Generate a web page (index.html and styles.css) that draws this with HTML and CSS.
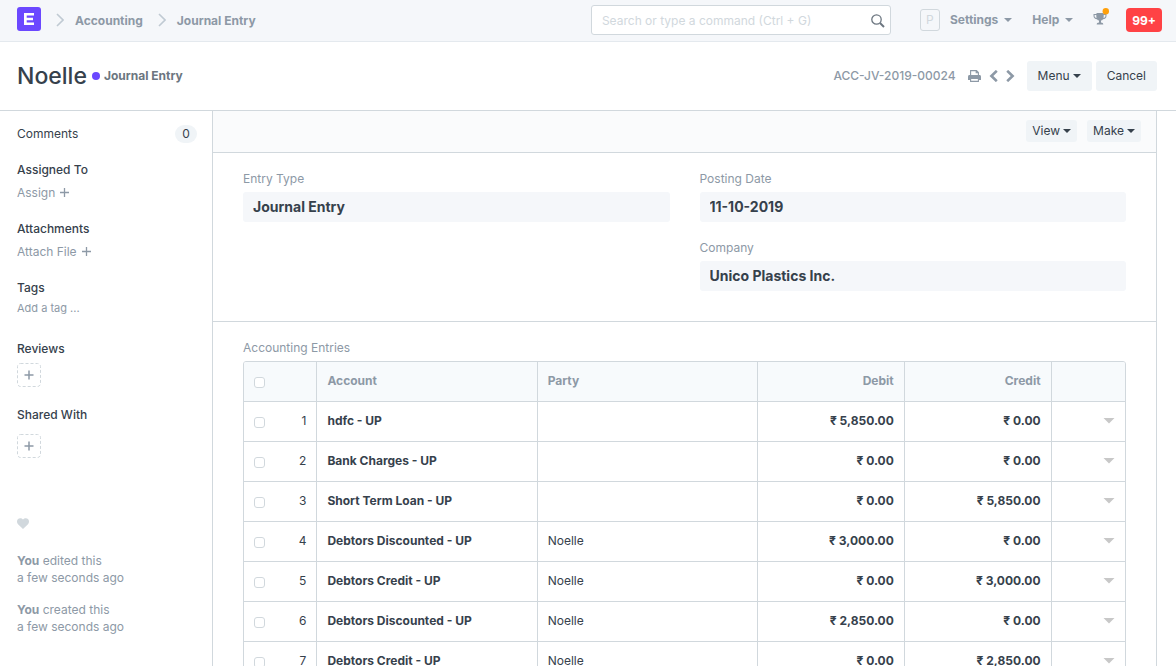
FILE: index.html
```html
<!DOCTYPE html>
<html lang="en">
<head>
<meta charset="utf-8">
<title>Noelle - Journal Entry</title>
<link rel="stylesheet" href="styles.css">
</head>
<body>
<header class="navbar">
  <nav class="crumbs" aria-label="Breadcrumb">
    <a href="#" class="logo" aria-label="Home">
      <svg width="24" height="24" viewBox="0 0 24 24"><rect width="24" height="24" rx="3" fill="#6b48ff"/><path d="M7 6h10v2.400H9.700v2.400h6.300v2.400H9.700v2.400H17V18H7z" fill="#fff"/></svg>
    </a>
    <svg class="crumb-sep" width="8" height="14" viewBox="0 0 8 14"><path d="M1 1l6 6-6 6" fill="none" stroke="#c0cad3" stroke-width="1.600"/></svg>
    <a href="#" class="nav-link">Accounting</a>
    <svg class="crumb-sep" width="8" height="14" viewBox="0 0 8 14"><path d="M1 1l6 6-6 6" fill="none" stroke="#c0cad3" stroke-width="1.600"/></svg>
    <a href="#" class="nav-link">Journal Entry</a>
  </nav>
  <div class="nav-right">
    <div class="search">
      <input type="text" class="search-input" placeholder="Search or type a command (Ctrl + G)" aria-label="Search or type a command">
      <svg class="search-icon" width="14" height="14" viewBox="0 0 14 14" fill="none" stroke="#6c7680"><circle cx="5.500" cy="5.500" r="4.700" stroke-width="1.300"/><path d="M9 9l4 4" stroke-width="2"/></svg>
    </div>
    <a href="#" class="avatar">P</a>
    <button type="button" class="nav-link nav-menu">Settings <span class="caret"></span></button>
    <button type="button" class="nav-link nav-menu">Help <span class="caret"></span></button>
    <button type="button" class="trophy" aria-label="Energy points">
      <svg width="16" height="20" viewBox="0 0 16 20"><path d="M3.500 5h7v1H13.500v2c0 2-1.500 3-3.500 3.200-.5.700-1.200 1.200-2 1.400V14.500c1.500.2 2.300.8 2.300 2H3.700c0-1.200.8-1.800 2.300-2v-1.900c-.8-.2-1.500-.7-2-1.400C2 11 .5 10 .5 8V6h3zM1.600 7.100V8c0 1 .7 1.700 1.900 2-.2-.9-.2-1.900-.2-2.900zm9.100 0c0 1 0 2-.2 2.900 1.200-.3 1.900-1 1.900-2v-.9z" fill="#8d99a6"/><circle cx="12.800" cy="3.200" r="3.200" fill="#ffa00a"/></svg>
    </button>
    <button type="button" class="alerts">99+</button>
  </div>
</header>

<div class="page-head">
  <div class="page-title">
    <h1 class="title">Noelle</h1>
    <span class="dot"></span>
    <span class="status">Journal Entry</span>
  </div>
  <div class="page-actions">
    <span class="doc-id">ACC-JV-2019-00024</span>
    <div class="icon-group">
      <button type="button" class="icon-btn" aria-label="Print"><svg width="13" height="12" viewBox="0 0 13 12"><path d="M2.600 5V.6h5.900l1.900 1.900V5M8.200.8v2h2" fill="none" stroke="#8d99a6" stroke-width="1.100"/><path d="M1.500 5h10C12.400 5 13 5.600 13 6.500V10H0V6.500C0 5.600.6 5 1.500 5z" fill="#8d99a6"/><path d="M2.600 8.500h7.800v2.900H2.600z" fill="#fff" stroke="#8d99a6" stroke-width="1.100"/></svg></button>
      <button type="button" class="icon-btn" aria-label="Previous"><svg width="9" height="12" viewBox="0 0 9 12"><path d="M7.800 .8L2.400 6l5.400 5.200" fill="none" stroke="#8d99a6" stroke-width="2.600"/></svg></button>
      <button type="button" class="icon-btn" aria-label="Next"><svg width="9" height="12" viewBox="0 0 9 12"><path d="M1.200 .8L6.600 6l-5.400 5.200" fill="none" stroke="#8d99a6" stroke-width="2.600"/></svg></button>
    </div>
    <div class="btn-group">
      <button type="button" class="btn">Menu <span class="caret"></span></button>
      <button type="button" class="btn">Cancel</button>
    </div>
  </div>
</div>

<div class="layout">
  <aside class="sidebar">
    <div class="comments"><a href="#" class="side-link">Comments</a><span class="badge">0</span></div>
    <section class="side-group">
      <h2 class="side-title">Assigned To</h2>
      <button type="button" class="add-link">Assign <svg width="9" height="9" viewBox="0 0 9 9"><path d="M4.500 0v9M0 4.500h9" stroke="#8d99a6" stroke-width="1.300"/></svg></button>
    </section>
    <section class="side-group">
      <h2 class="side-title">Attachments</h2>
      <button type="button" class="add-link">Attach File <svg width="9" height="9" viewBox="0 0 9 9"><path d="M4.500 0v9M0 4.500h9" stroke="#8d99a6" stroke-width="1.300"/></svg></button>
    </section>
    <section class="side-group side-tags">
      <h2 class="side-title">Tags</h2>
      <button type="button" class="add-link tag-link">Add a tag ...</button>
    </section>
    <section class="side-group">
      <h2 class="side-title">Reviews</h2>
      <button type="button" class="add-box" aria-label="Add review"><svg width="24" height="24" viewBox="0 0 24 24"><rect x=".5" y=".5" width="23" height="23" rx="3" fill="none" stroke="#d1d8dd" stroke-dasharray="3 2"/><path d="M12 7.500v9M7.500 12h9" stroke="#8d99a6" stroke-width="1.500"/></svg></button>
    </section>
    <section class="side-group side-shared">
      <h2 class="side-title">Shared With</h2>
      <button type="button" class="add-box" aria-label="Share"><svg width="24" height="24" viewBox="0 0 24 24"><rect x=".5" y=".5" width="23" height="23" rx="3" fill="none" stroke="#d1d8dd" stroke-dasharray="3 2"/><path d="M12 7.500v9M7.500 12h9" stroke="#8d99a6" stroke-width="1.500"/></svg></button>
    </section>
    <button type="button" class="like" aria-label="Like"><svg width="12" height="11" viewBox="0 0 12 11"><path d="M6 11L1 6.200C-.3 4.900-.3 2.600.8 1.300 2-.2 4.500-.4 6 1.500 7.500-.4 10-.2 11.200 1.300c1.100 1.300 1.100 3.600-.2 4.900z" fill="#d1d8dd"/></svg></button>
    <p class="history"><b>You</b> edited this<br>a few seconds ago</p>
    <p class="history"><b>You</b> created this<br>a few seconds ago</p>
  </aside>

  <main class="form">
    <div class="toolbar">
      <button type="button" class="btn btn-xs">View <span class="caret"></span></button>
      <button type="button" class="btn btn-xs">Make <span class="caret"></span></button>
    </div>
    <section class="section section-fields">
      <div class="column">
        <div class="field"><label class="label" for="entry-type">Entry Type</label><input class="value" id="entry-type" value="Journal Entry" readonly></div>
      </div>
      <div class="column">
        <div class="field"><label class="label" for="posting-date">Posting Date</label><input class="value" id="posting-date" value="11-10-2019" readonly></div>
        <div class="field"><label class="label" for="company">Company</label><input class="value" id="company" value="Unico Plastics Inc." readonly></div>
      </div>
    </section>
    <section class="section">
      <div class="label" id="entries-label">Accounting Entries</div>
      <div class="grid">
        <table class="entries" aria-labelledby="entries-label">
          <colgroup><col class="col-1"><col class="col-3"><col class="col-3"><col class="col-2"><col class="col-2"><col class="col-1"></colgroup>
          <thead>
            <tr><th><div class="index"><input type="checkbox" class="check" aria-label="Select all"></div></th><th>Account</th><th>Party</th><th class="num">Debit</th><th class="num">Credit</th><th></th></tr>
          </thead>
          <tbody>
            <tr><td><div class="index"><input type="checkbox" class="check" aria-label="Select row 1"><span>1</span></div></td><td class="strong">hdfc - UP</td><td></td><td class="num">₹ 5,850.00</td><td class="num">₹ 0.00</td><td class="open"><button type="button" class="row-open" aria-label="Open row 1"></button></td></tr>
            <tr><td><div class="index"><input type="checkbox" class="check" aria-label="Select row 2"><span>2</span></div></td><td class="strong">Bank Charges - UP</td><td></td><td class="num">₹ 0.00</td><td class="num">₹ 0.00</td><td class="open"><button type="button" class="row-open" aria-label="Open row 2"></button></td></tr>
            <tr><td><div class="index"><input type="checkbox" class="check" aria-label="Select row 3"><span>3</span></div></td><td class="strong">Short Term Loan - UP</td><td></td><td class="num">₹ 0.00</td><td class="num">₹ 5,850.00</td><td class="open"><button type="button" class="row-open" aria-label="Open row 3"></button></td></tr>
            <tr><td><div class="index"><input type="checkbox" class="check" aria-label="Select row 4"><span>4</span></div></td><td class="strong">Debtors Discounted - UP</td><td>Noelle</td><td class="num">₹ 3,000.00</td><td class="num">₹ 0.00</td><td class="open"><button type="button" class="row-open" aria-label="Open row 4"></button></td></tr>
            <tr><td><div class="index"><input type="checkbox" class="check" aria-label="Select row 5"><span>5</span></div></td><td class="strong">Debtors Credit - UP</td><td>Noelle</td><td class="num">₹ 0.00</td><td class="num">₹ 3,000.00</td><td class="open"><button type="button" class="row-open" aria-label="Open row 5"></button></td></tr>
            <tr><td><div class="index"><input type="checkbox" class="check" aria-label="Select row 6"><span>6</span></div></td><td class="strong">Debtors Discounted - UP</td><td>Noelle</td><td class="num">₹ 2,850.00</td><td class="num">₹ 0.00</td><td class="open"><button type="button" class="row-open" aria-label="Open row 6"></button></td></tr>
            <tr><td><div class="index"><input type="checkbox" class="check" aria-label="Select row 7"><span>7</span></div></td><td class="strong">Debtors Credit - UP</td><td>Noelle</td><td class="num">₹ 0.00</td><td class="num">₹ 2,850.00</td><td class="open"><button type="button" class="row-open" aria-label="Open row 7"></button></td></tr>
          </tbody>
        </table>
      </div>
    </section>
  </main>
</div>
</body>
</html>
```

FILE: styles.css
```css
* { box-sizing: border-box; }

html { scrollbar-width: none; }

body {
  margin: 0;
  font: 12px/17px Inter, "Noto Sans", sans-serif;
  color: #36414c;
  background: #fff;
}

button {
  font: inherit;
  color: inherit;
  background: none;
  border: 0;
  padding: 0;
  cursor: pointer;
}

a { color: inherit; text-decoration: none; }
h1, h2, p { margin: 0; }
svg { display: block; flex: none; }

.caret {
  display: inline-block;
  margin-top: 2px;
  border: 4px solid transparent;
  border-top-color: currentColor;
  border-bottom: 0;
}

/* Navigation bar */
.navbar {
  display: flex;
  align-items: center;
  justify-content: space-between;
  height: 42px;
  padding: 0 14px 1px 17px;
  background: #f5f7fa;
  border-bottom: 1px solid #e4e9ee;
}

.crumbs { display: flex; align-items: center; }
.logo { margin-bottom: 2px; }
.crumb-sep { margin: 0 11px 0 15px; }
.nav-link { color: #8d99a6; font-weight: 700; }
.nav-right { display: flex; align-items: center; }
.search { position: relative; width: 300px; }

.search-input {
  display: block;
  width: 100%;
  height: 30px;
  padding: 0 34px 0 10px;
  font: inherit;
  color: #36414c;
  background: #fff;
  border: 1px solid #d1d8dd;
  border-radius: 3px;
}

.search-input::placeholder { color: #d1d8dd; opacity: 1; }
.search-icon { position: absolute; top: 9px; right: 6px; }

.avatar {
  width: 20px;
  height: 22px;
  margin: 0 10px 0 29px;
  line-height: 20px;
  text-align: center;
  color: #d1d8dd;
  border: 1px solid #d1d8dd;
  border-radius: 3px;
}

.nav-menu { display: flex; align-items: center; gap: 6px; margin-right: 20px; padding-bottom: 2px; }
.trophy { margin-right: 17px; padding-bottom: 4px; }

.alerts {
  height: 24px;
  padding: 0 6px;
  color: #fff;
  font-weight: 700;
  background: #ff4245;
  border-radius: 4px;
}

/* Page heading */
.page-head {
  display: flex;
  align-items: center;
  justify-content: space-between;
  height: 69px;
  padding: 0 19px 0 17px;
  border-bottom: 1px solid #d1d8dd;
}

.page-title { display: flex; align-items: center; }
.title { font-size: 23px; line-height: 32px; font-weight: 500; }

.dot {
  width: 8px;
  height: 8px;
  margin: 0 4px 0 5px;
  background: #6b48ff;
  border-radius: 50%;
}

.status { padding-bottom: 2px; color: #6c7680; font-weight: 700; }
.page-actions { display: flex; align-items: center; gap: 12px; }
.doc-id { padding-bottom: 2px; color: #8d99a6; font-weight: 500; }
.icon-group { display: flex; align-items: center; gap: 8px; }
.btn-group { display: flex; gap: 4px; }

.btn {
  display: flex;
  align-items: center;
  gap: 3px;
  height: 30px;
  padding: 0 11px 2px;
  background: #f0f4f7;
  border-radius: 3px;
}

.btn-xs { height: 22px; padding: 0 6px 2px; }

/* Sidebar */
.layout { display: flex; align-items: stretch; padding-right: 19px; }
.sidebar { flex: 0 0 212px; padding: 14px 15px 20px 17px; }
.comments { display: flex; align-items: flex-start; justify-content: space-between; margin-bottom: 18px; }

.badge {
  width: 22px;
  line-height: 18px;
  text-align: center;
  background: #f0f4f7;
  border-radius: 9px;
}

.side-group { margin-bottom: 19px; }
.side-tags { margin-bottom: 23px; }
.side-title { margin-bottom: 6px; font-size: 12px; line-height: 17px; font-weight: 500; }
.side-tags .side-title { margin-bottom: 4px; }
.side-shared .side-title { margin-bottom: 11px; }
.add-link { display: flex; align-items: center; gap: 5px; color: #8d99a6; }
.tag-link { font-size: 11px; }
.add-box, .like { display: block; }
.like { margin: 60px 0 23px; }
.history { margin-bottom: 15px; color: #8d99a6; }
.history b { font-weight: 700; }

/* Form */
.form {
  flex: 1;
  min-width: 0;
  border: solid #d1d8dd;
  border-width: 0 1px;
}

.toolbar {
  display: flex;
  justify-content: flex-end;
  gap: 10px;
  padding: 9px 15px 10px;
  background: #fafbfc;
  border-bottom: 1px solid #d1d8dd;
}

.section { padding: 17px 30px 30px; }

.section-fields {
  display: grid;
  grid-template-columns: 1fr 1fr;
  gap: 30px;
  border-bottom: 1px solid #d1d8dd;
}

.column { display: flex; flex-direction: column; gap: 17px; }
.label { display: block; margin-bottom: 5px; color: #8d99a6; }

.value {
  display: block;
  width: 100%;
  height: 30px;
  padding: 0 10px 2px;
  font: 700 14px/20px Inter, "Noto Sans", sans-serif;
  color: #36414c;
  background: #f5f7fa;
  border: 0;
  border-radius: 3px;
}

/* Entries table */
.grid { border: 1px solid #d1d8dd; border-radius: 3px; overflow: hidden; }
.entries { width: 100%; table-layout: fixed; border-collapse: separate; border-spacing: 0; }
.col-1 { width: 8.333%; }
.col-2 { width: 16.667%; }
.col-3 { width: 25%; }

.entries th, .entries td {
  height: 40px;
  padding: 0 10px 2px;
  text-align: left;
  border: solid #d1d8dd;
  border-width: 0 1px 1px 0;
}

.entries th:last-child, .entries td:last-child { border-right: 0; }
.entries tbody tr:last-child td { border-bottom-color: transparent; }
.entries th { color: #8d99a6; font-weight: 700; background: #f7fafc; }
.entries .strong, .entries td.num { font-weight: 700; }
.entries .num { text-align: right; }
.index { display: flex; align-items: center; justify-content: space-between; }

.check {
  appearance: none;
  width: 11px;
  height: 11px;
  margin: 3px 0 0;
  background: #fff;
  border: 1px solid #d1d8dd;
  border-radius: 3px;
}

.row-open {
  display: block;
  width: 12px;
  height: 6px;
  margin-left: auto;
  background: #c8c8c8;
  clip-path: polygon(0 0, 100% 0, 50% 100%);
}
```
